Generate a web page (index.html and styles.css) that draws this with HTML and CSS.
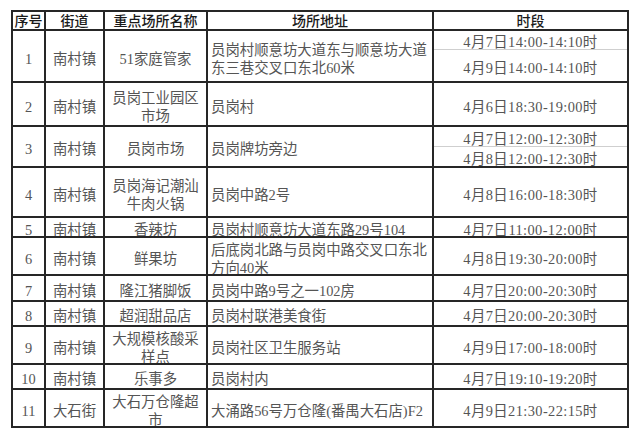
FILE: index.html
```html
<!DOCTYPE html>
<html lang="zh-CN">
<head>
<meta charset="utf-8">
<title>重点场所</title>
<link rel="stylesheet" href="styles.css">
</head>
<body>
<div class="sheet">
  <div class="th">序号</div><div class="th">街道</div><div class="th">重点场所名称</div><div class="th">场所地址</div><div class="th">时段</div>

  <div class="c">1</div><div class="c">南村镇</div><div class="c">51家庭管家</div><div class="c addr">员岗村顺意坊大道东与顺意坊大道<br>东三巷交叉口东北60米</div>
  <div class="split"><div class="sub r1a">4月7日14:00-14:10时</div><div class="sub r1b">4月9日14:00-14:10时</div></div>

  <div class="c">2</div><div class="c">南村镇</div><div class="c">员岗工业园区<br>市场</div><div class="c addr">员岗村</div><div class="c t">4月6日18:30-19:00时</div>

  <div class="c">3</div><div class="c">南村镇</div><div class="c">员岗市场</div><div class="c addr">员岗牌坊旁边</div>
  <div class="split"><div class="sub r3a">4月7日12:00-12:30时</div><div class="sub r3b">4月8日12:00-12:30时</div></div>

  <div class="c">4</div><div class="c">南村镇</div><div class="c">员岗海记潮汕<br>牛肉火锅</div><div class="c addr">员岗中路2号</div><div class="c t">4月8日16:00-18:30时</div>

  <div class="c">5</div><div class="c">南村镇</div><div class="c">香辣坊</div><div class="c addr">员岗村顺意坊大道东路29号104</div><div class="c t">4月7日11:00-12:00时</div>

  <div class="c">6</div><div class="c">南村镇</div><div class="c">鲜果坊</div><div class="c addr">后底岗北路与员岗中路交叉口东北<br>方向40米</div><div class="c t">4月8日19:30-20:00时</div>

  <div class="c">7</div><div class="c">南村镇</div><div class="c">隆江猪脚饭</div><div class="c addr">员岗中路9号之一102房</div><div class="c t">4月7日20:00-20:30时</div>

  <div class="c">8</div><div class="c">南村镇</div><div class="c">超润甜品店</div><div class="c addr">员岗村联港美食街</div><div class="c t">4月7日20:00-20:30时</div>

  <div class="c">9</div><div class="c">南村镇</div><div class="c">大规模核酸采<br>样点</div><div class="c addr">员岗社区卫生服务站</div><div class="c t">4月9日17:00-18:00时</div>

  <div class="c">10</div><div class="c">南村镇</div><div class="c">乐事多</div><div class="c addr">员岗村内</div><div class="c t">4月7日19:10-19:20时</div>

  <div class="c">11</div><div class="c">大石街</div><div class="c">大石万仓隆超<br>市</div><div class="c addr">大涌路56号万仓隆(番禺大石店)F2</div><div class="c t">4月9日21:30-22:15时</div>
</div>
</body>
</html>
```
FILE: styles.css
```css
* { box-sizing: border-box; }
html, body { margin: 0; padding: 0; background: #fff; }
body { width: 640px; height: 440px; overflow: hidden; }

.sheet {
  margin: 10px 0 0 11px;
  display: grid;
  width: max-content;
  grid-template-columns: 31px 57px 101px 224px 193px;
  grid-template-rows: 17px 50px 42px 39px 48px 18px 36px 24px 23px 36px 23px 36px;
  gap: 2px;
  padding: 2px;
  background: #262626;
  font-family: "Liberation Serif", "Noto Sans CJK SC", serif;
  font-size: 14.4px;
  line-height: 18px;
  color: #555;
}

.th, .c, .sub {
  background: #fff;
  display: flex;
  align-items: center;
  justify-content: center;
  text-align: center;
  white-space: nowrap;
  overflow: hidden;
}

.th {
  font-family: "Noto Sans CJK SC", sans-serif;
  font-weight: 500;
  font-size: 14px;
  line-height: 17px;
  color: #1a1a1a;
  overflow: visible;
}

.c { padding-top: 5px; }

.addr {
  justify-content: flex-start;
  text-align: left;
  padding-left: 3px;
}

.t, .sub { letter-spacing: 0.4px; }

.split {
  display: flex;
  flex-direction: column;
  background: #fff;
}

.sub { padding-top: 4px; }
.r1a { height: 19px; flex: none; border-bottom: 1px solid #cfcfcf; }
.r1b { flex: 1; }
.r3a { height: 20px; flex: none; border-bottom: 1px solid #cfcfcf; }
.r3b { flex: 1; }
```
